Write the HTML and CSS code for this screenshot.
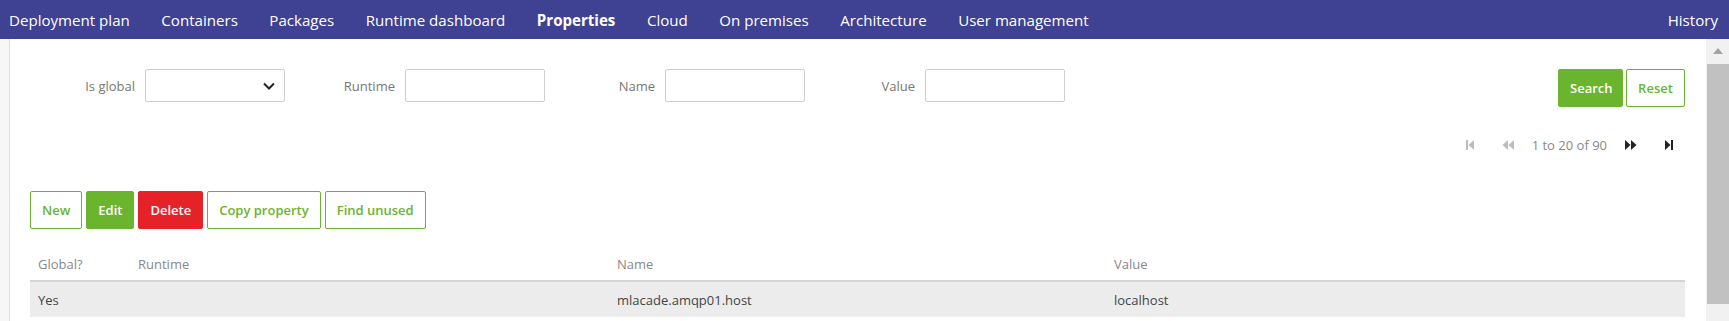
FILE: index.html
```html
<!DOCTYPE html>
<html lang="en">
<head>
  <meta charset="UTF-8">
  <title>Properties</title>
  <link rel="stylesheet" href="styles.css">
</head>
<body>

  <nav class="navbar">
    <a href="#">Deployment plan</a>
    <a href="#">Containers</a>
    <a href="#">Packages</a>
    <a href="#">Runtime dashboard</a>
    <a href="#" class="active">Properties</a>
    <a href="#">Cloud</a>
    <a href="#">On premises</a>
    <a href="#">Architecture</a>
    <a href="#">User management</a>
    <a href="#" class="history">History</a>
  </nav>

  <div class="page">
    <div class="content">

      <div class="filters">
        <div class="filter-group">
          <label for="isGlobal">Is global</label>
          <div class="select-box" id="isGlobal">
            <svg width="12" height="8" viewBox="0 0 12 8"><path d="M1 1.5 L6 6.5 L11 1.5" fill="none" stroke="#222" stroke-width="2"/></svg>
          </div>
        </div>
        <div class="filter-group">
          <label for="runtime">Runtime</label>
          <input id="runtime" type="text">
        </div>
        <div class="filter-group">
          <label for="name">Name</label>
          <input id="name" type="text">
        </div>
        <div class="filter-group">
          <label for="value">Value</label>
          <input id="value" type="text">
        </div>
        <div class="filter-actions">
          <button class="btn btn-green">Search</button>
          <button class="btn btn-outline">Reset</button>
        </div>
      </div>

      <div class="pager">
        <span class="pager-icon first">
          <svg width="8" height="10" viewBox="0 0 8 10"><rect x="0" y="0" width="2" height="10"/><path d="M8 0 L2.5 5 L8 10 Z"/></svg>
        </span>
        <span class="pager-icon prev">
          <svg width="12" height="10" viewBox="0 0 12 10"><path d="M6 0 L0.5 5 L6 10 Z"/><path d="M12 0 L6.5 5 L12 10 Z"/></svg>
        </span>
        <span class="pager-text">1 to 20 of 90</span>
        <span class="pager-icon next">
          <svg width="12" height="10" viewBox="0 0 12 10"><path d="M0 0 L5.5 5 L0 10 Z"/><path d="M6 0 L11.5 5 L6 10 Z"/></svg>
        </span>
        <span class="pager-icon last">
          <svg width="8" height="10" viewBox="0 0 8 10"><path d="M0 0 L5.5 5 L0 10 Z"/><rect x="6" y="0" width="2" height="10"/></svg>
        </span>
      </div>

      <div class="toolbar">
        <button class="btn btn-outline">New</button>
        <button class="btn btn-green">Edit</button>
        <button class="btn btn-red">Delete</button>
        <button class="btn btn-outline">Copy property</button>
        <button class="btn btn-outline">Find unused</button>
      </div>

      <table class="grid">
        <thead>
          <tr>
            <th class="col-global">Global?</th>
            <th class="col-runtime">Runtime</th>
            <th class="col-name">Name</th>
            <th>Value</th>
          </tr>
        </thead>
        <tbody>
          <tr class="selected">
            <td>Yes</td>
            <td></td>
            <td>mlacade.amqp01.host</td>
            <td>localhost</td>
          </tr>
        </tbody>
      </table>

    </div>

    <div class="scrollbar">
      <div class="scroll-arrow"></div>
      <div class="scroll-thumb"></div>
    </div>
  </div>

</body>
</html>
```

FILE: styles.css
```css
* {
  box-sizing: border-box;
}

body {
  margin: 0;
  font-family: "Open Sans", "Noto Sans", sans-serif;
  background-color: #f7f7f7;
  overflow: hidden;
}

.navbar {
  display: flex;
  align-items: center;
  gap: 31.5px;
  height: 39px;
  padding: 0 11px 0 9px;
  background-color: #3f4192;
}

.navbar a {
  color: #ffffff;
  font-size: 15.1px;
  text-decoration: none;
  white-space: nowrap;
}

.navbar a.active {
  font-weight: bold;
}

.navbar a.history {
  margin-left: auto;
}

.page {
  display: flex;
  height: 282px;
  padding-left: 9px;
}

.content {
  flex: 1;
  background-color: #ffffff;
  border-left: 1px solid #e2e2e2;
  padding: 30px 21px 0 20px;
}

/* filters */

.filters {
  display: flex;
  align-items: flex-start;
  margin-left: -5px;
  height: 38px;
}

.filter-group {
  display: flex;
  align-items: center;
  justify-content: flex-end;
  gap: 10px;
  width: 260px;
  height: 33px;
}

.filter-group label {
  font-size: 13px;
  color: #777;
}

.filter-group input,
.select-box {
  width: 140px;
  height: 33px;
  border: 1px solid #cfcfcf;
  border-radius: 2px;
  font-size: 13px;
}

.select-box {
  display: flex;
  align-items: center;
  justify-content: flex-end;
  padding-right: 9px;
}

.filter-actions {
  display: flex;
  gap: 3px;
  margin-left: auto;
}

/* buttons */

.btn {
  height: 38px;
  padding: 0 11px;
  border: 1px solid #6ab42e;
  border-radius: 2px;
  font-family: inherit;
  font-size: 13px;
  font-weight: 600;
  cursor: pointer;
}

.btn-outline {
  background-color: #ffffff;
  color: #6ab42e;
}

.btn-green {
  background-color: #6ab42e;
  color: #ffffff;
}

.btn-red {
  background-color: #e52228;
  border-color: #e52228;
  color: #ffffff;
}

.filter-actions .btn-green {
  width: 65px;
}

.filter-actions .btn-outline {
  width: 59px;
}

/* pager */

.pager {
  display: flex;
  align-items: center;
  justify-content: flex-end;
  height: 24px;
  margin-top: 26px;
  padding-right: 4px;
}

.pager-icon {
  display: flex;
  justify-content: center;
  width: 24px;
  fill: #bdbdbd;
}

.pager-icon.next,
.pager-icon.last {
  fill: #222;
}

.pager-icon.prev {
  margin-left: 14px;
}

.pager-icon.last {
  margin-left: 14px;
}

.pager-text {
  margin: 0 12px;
  font-size: 13px;
  color: #888;
}

/* toolbar */

.toolbar {
  display: flex;
  gap: 4px;
  margin-top: 34px;
}

/* table */

.grid {
  width: 100%;
  margin-top: 18px;
  border-collapse: collapse;
  font-size: 13px;
}

.grid th {
  height: 34px;
  padding: 0 8px;
  text-align: left;
  font-weight: normal;
  color: #888;
  border-bottom: 2px solid #d4d4d4;
}

.grid td {
  height: 36px;
  padding: 0 8px;
  color: #444;
}

.grid .col-global {
  width: 100px;
}

.grid .col-runtime {
  width: 479px;
}

.grid .col-name {
  width: 497px;
}

.grid tr.selected td {
  background-color: #ececec;
}

/* fake scrollbar */

.scrollbar {
  width: 23px;
  background-color: #f1f1f1;
}

.scroll-arrow {
  width: 0;
  height: 0;
  margin: 9px auto 0;
  border-left: 5px solid transparent;
  border-right: 5px solid transparent;
  border-bottom: 6px solid #a3a3a3;
}

.scroll-thumb {
  height: 240px;
  margin: 10px 0 0 1px;
  background-color: #c1c1c1;
}
```
